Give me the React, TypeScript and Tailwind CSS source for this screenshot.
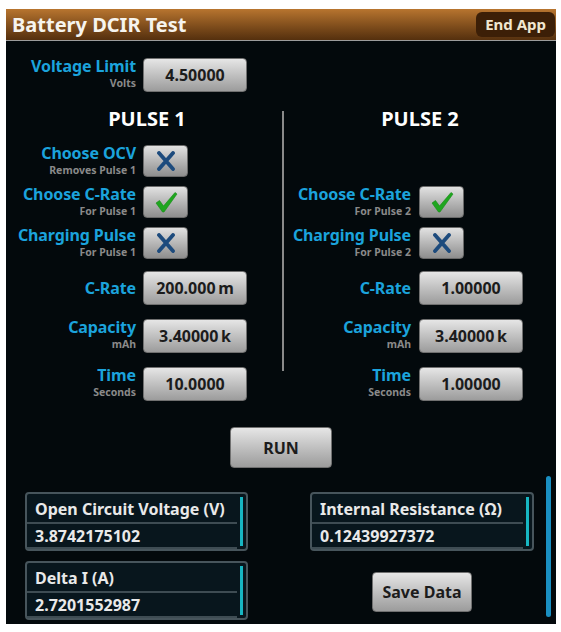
import React from 'react';

const XIcon = () => (
    <svg width="22" height="20" viewBox="0 0 22 20">
        <path d="M4 2 L18 18 M18 2 L4 18" stroke="#1d4b7d" strokeWidth="3.8" strokeLinecap="round" fill="none" />
    </svg>
);

const CheckIcon = () => (
    <svg width="24" height="22" viewBox="0 0 24 22">
        <path d="M2 12 L5.5 9.5 L9.5 15 L21 1.5 L23 3 L10 21 L8.5 21 Z" fill="#1fa61f" stroke="#148a14" strokeWidth="0.6" strokeLinejoin="round" />
    </svg>
);

const Label = ({ main, sub, w }: { main: string; sub?: string; w: string }) => (
    <div className={`${w} flex flex-col items-end shrink-0`}>
        <span className="text-[16px] leading-[17px] font-bold text-[#1ba3dc] whitespace-nowrap tracking-[-0.1px]">{main}</span>
        {sub && <span className="text-[10.5px] leading-[14px] mt-[1px] font-bold text-[#8a8a8a] whitespace-nowrap">{sub}</span>}
    </div>
);

const ValueBtn = ({ value, w = 'w-[104px]' }: { value: string; w?: string }) => (
    <div className={`${w} h-[34px] shrink-0 rounded-[4px] border border-[#707070] bg-gradient-to-b from-[#e6e6e6] to-[#9c9c9c] flex items-center justify-center text-[16px] font-bold text-[#1c1c1c]`}>
        {value}
    </div>
);

const CheckBtn = ({ on }: { on: boolean }) => (
    <div className="w-[45px] h-[32px] shrink-0 rounded-[4px] border border-[#6a6a6a] bg-gradient-to-b from-[#e2e2e2] to-[#8e8e8e] flex items-center justify-center">
        {on ? <CheckIcon /> : <XIcon />}
    </div>
);

const Row = ({ main, sub, lw, children, gap }: { main: string; sub?: string; lw: string; children: React.ReactNode; gap: string }) => (
    <div className={`flex ${sub ? 'items-start' : 'items-center'} ${gap}`}>
        <Label main={main} sub={sub} w={lw} />
        {children}
    </div>
);

const ResultBox = ({ title, value }: { title: string; value: string }) => (
    <div className="h-[59px] rounded-[4px] border-2 border-[#47555c] bg-[#08161d] flex">
        <div className="flex-1 flex flex-col pl-[8px]">
            <div className="h-[28px] pt-[1px] flex items-center text-[16px] font-bold text-[#e9e9e9] whitespace-nowrap">{title}</div>
            <div className="h-[2px] bg-[#3e4c53] -ml-[8px]"></div>
            <div className="h-[23px] flex items-center text-[16px] font-bold text-[#e9e9e9]">{value}</div>
            <div className="h-[2px] bg-[#3e4c53] -ml-[8px]"></div>
        </div>
        <div className="w-[3px] bg-[#17b6c2] my-[3px] mx-[3px]"></div>
    </div>
);

export default function App() {
    return (
        <div className="w-[561px] h-[632px] bg-white pt-[9px] pl-[6px] font-['Noto_Sans',sans-serif]">
            <div className="w-[550px] h-[615px] bg-[#03090c] overflow-hidden flex flex-col">
                {/* Header */}
                <div className="h-[32px] shrink-0 bg-gradient-to-b from-[#b8752f] to-[#55300e] border-b border-[#9c9c9c] flex items-center justify-between pl-[6px] pr-[1px]">
                    <span className="text-[20px] font-bold text-[#f6f4ee]">Battery DCIR Test</span>
                    <div className="h-[25px] px-[9px] rounded-[6px] bg-[#3c1f07] flex items-center text-[15px] font-bold text-[#f1e7d1]">End App</div>
                </div>

                <div className="relative flex-1 flex flex-col">
                    {/* Voltage limit */}
                    <div className="mt-[17px]">
                        <Row main="Voltage Limit" sub="Volts" lw="w-[130px]" gap="gap-[7px]">
                            <ValueBtn value="4.50000" />
                        </Row>
                    </div>

                    {/* Pulses */}
                    <div className="mt-[15px] flex">
                        <div className="w-[276px] flex flex-col">
                            <div className="h-[24px] pl-[6px] text-center text-[20px] font-bold text-white leading-[24px]">PULSE 1</div>
                            <div className="mt-[14px] flex flex-col gap-[9px]">
                                <Row main="Choose OCV" sub="Removes Pulse 1" lw="w-[130px]" gap="gap-[7px]"><CheckBtn on={false} /></Row>
                                <Row main="Choose C-Rate" sub="For Pulse 1" lw="w-[130px]" gap="gap-[7px]"><CheckBtn on={true} /></Row>
                                <Row main="Charging Pulse" sub="For Pulse 1" lw="w-[130px]" gap="gap-[7px]"><CheckBtn on={false} /></Row>
                            </div>
                            <div className="mt-[12px] flex flex-col gap-[14px]">
                                <Row main="C-Rate" lw="w-[130px]" gap="gap-[7px]"><ValueBtn value={'200.000\u2009m'} /></Row>
                                <Row main="Capacity" sub="mAh" lw="w-[130px]" gap="gap-[7px]"><ValueBtn value={'3.40000\u2009k'} /></Row>
                                <Row main="Time" sub="Seconds" lw="w-[130px]" gap="gap-[7px]"><ValueBtn value="10.0000" /></Row>
                            </div>
                        </div>
                        <div className="w-[2px] h-[260px] mt-[4px] bg-[#8a8a8a]"></div>
                        <div className="flex-1 flex flex-col">
                            <div className="h-[24px] text-center text-[20px] font-bold text-white leading-[24px]">PULSE 2</div>
                            <div className="mt-[14px] flex flex-col gap-[9px]">
                                <div className="h-[32px]"></div>
                                <Row main="Choose C-Rate" sub="For Pulse 2" lw="w-[127px]" gap="gap-[8px]"><CheckBtn on={true} /></Row>
                                <Row main="Charging Pulse" sub="For Pulse 2" lw="w-[127px]" gap="gap-[8px]"><CheckBtn on={false} /></Row>
                            </div>
                            <div className="mt-[12px] flex flex-col gap-[14px]">
                                <Row main="C-Rate" lw="w-[127px]" gap="gap-[8px]"><ValueBtn value="1.00000" /></Row>
                                <Row main="Capacity" sub="mAh" lw="w-[127px]" gap="gap-[8px]"><ValueBtn value={'3.40000\u2009k'} /></Row>
                                <Row main="Time" sub="Seconds" lw="w-[127px]" gap="gap-[8px]"><ValueBtn value="1.00000" /></Row>
                            </div>
                        </div>
                    </div>

                    {/* Run */}
                    <div className="mt-[26px] mx-auto w-[102px] h-[41px] rounded-[4px] border border-[#707070] bg-gradient-to-b from-[#e6e6e6] to-[#9c9c9c] flex items-center justify-center text-[16px] font-bold text-[#1c1c1c]">
                        RUN
                    </div>

                    {/* Results */}
                    <div className="mt-[24px] flex pl-[19px]">
                        <div className="w-[223px] flex flex-col gap-[10px]">
                            <ResultBox title="Open Circuit Voltage (V)" value="3.8742175102" />
                            <ResultBox title="Delta I (A)" value="2.7201552987" />
                        </div>
                        <div className="ml-[62px] w-[224px] flex flex-col items-center">
                            <div className="w-full"><ResultBox title="Internal Resistance (Ω)" value="0.12439927372" /></div>
                            <div className="mt-[21px] w-[100px] h-[40px] rounded-[4px] border border-[#707070] bg-gradient-to-b from-[#e6e6e6] to-[#9c9c9c] flex items-center justify-center text-[16px] font-bold text-[#1c1c1c]">
                                Save Data
                            </div>
                        </div>
                    </div>

                    {/* scroll indicator */}
                    <div className="absolute left-[540px] top-[435px] w-[5px] h-[141px] rounded-full bg-[#1a8fc2]"></div>
                </div>
            </div>
        </div>
    );
}
